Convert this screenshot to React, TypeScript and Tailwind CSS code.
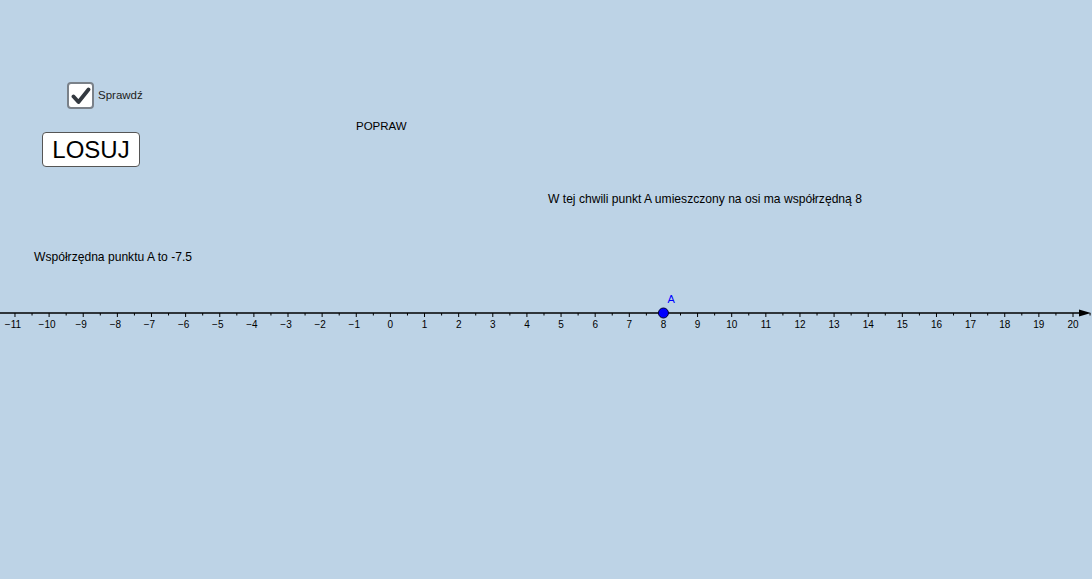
import React from "react";

const W = 1092;
const AXIS_Y = 313;
const ORIGIN_X = 390.4;
const UNIT = 34.13;

const ticks = Array.from({ length: 32 }, (_, i) => i - 11);
const halfTicks = Array.from({ length: 32 }, (_, i) => i - 11 + 0.5);

const px = (v: number) => ORIGIN_X + v * UNIT;

function NumberLine({ point }: { point: number }) {
  return (
    <svg width={W} height={60} className="absolute left-0 top-[283px]" viewBox={`0 ${AXIS_Y - 30} ${W} 60`}>
      <line x1={0} y1={AXIS_Y} x2={1080} y2={AXIS_Y} stroke="#000" strokeWidth={1.5} />
      <path d={`M1079 ${AXIS_Y - 3.5} L1091 ${AXIS_Y} L1079 ${AXIS_Y + 3.5} Z`} fill="#000" />
      {ticks.map((t) => (
        <g key={t}>
          <line x1={px(t)} y1={AXIS_Y} x2={px(t)} y2={AXIS_Y + 4} stroke="#000" strokeWidth={1} />
          <text
            x={px(t) - (t < 0 ? 2 : 0)}
            y={AXIS_Y + 14.5}
            textAnchor="middle"
            fontSize={10}
            fontFamily='"Liberation Sans", Arial, sans-serif'
            fill="#000"
          >
            {t < 0 ? `\u2212${-t}` : t}
          </text>
        </g>
      ))}
      {halfTicks.map((t) => (
        <line key={t} x1={px(t)} y1={AXIS_Y} x2={px(t)} y2={AXIS_Y + 2.5} stroke="#000" strokeWidth={1} />
      ))}
      <circle cx={px(point)} cy={AXIS_Y} r={5} fill="#0000ff" stroke="#000033" strokeWidth={1} />
      <text
        x={px(point) + 4}
        y={AXIS_Y - 10.5}
        fontSize={11}
        fontFamily='"Liberation Sans", Arial, sans-serif'
        fill="#0000ff"
      >
        A
      </text>
    </svg>
  );
}

export default function App() {
  return (
    <div
      className="relative h-[579px] w-[1092px] overflow-hidden bg-[#bdd3e6] text-[12px] text-black"
      style={{ fontFamily: '"Liberation Sans", Arial, sans-serif' }}
    >
      <label className="absolute left-[67px] top-[82px] flex items-center gap-[4px]">
        <span className="flex h-[27px] w-[27px] items-center justify-center rounded-[4px] border-2 border-[#7a8189] bg-white">
          <svg width="20" height="18" viewBox="0 0 20 18">
            <path d="M2.5 9.5 L7.5 15 L17.5 2.5" fill="none" stroke="#333940" strokeWidth="3.8" strokeLinecap="round" strokeLinejoin="round" />
          </svg>
        </span>
        <span className="text-[11.5px] text-[#222]">Sprawdź</span>
      </label>

      <button className="absolute left-[42px] top-[132px] flex h-[35px] w-[98px] items-center justify-center rounded-[4px] border border-[#555] bg-white text-[24px] leading-none text-black">
        LOSUJ
      </button>

      <div className="absolute left-[356px] top-[118px] text-[11.5px]">POPRAW</div>

      <div className="absolute left-[548px] top-[190px] text-[12.1px]">
        W tej chwili punkt A umieszczony na osi ma współrzędną 8
      </div>

      <div className="absolute left-[34px] top-[248px] text-[12.1px]">Współrzędna punktu A to -7.5</div>

      <NumberLine point={8} />
    </div>
  );
}
